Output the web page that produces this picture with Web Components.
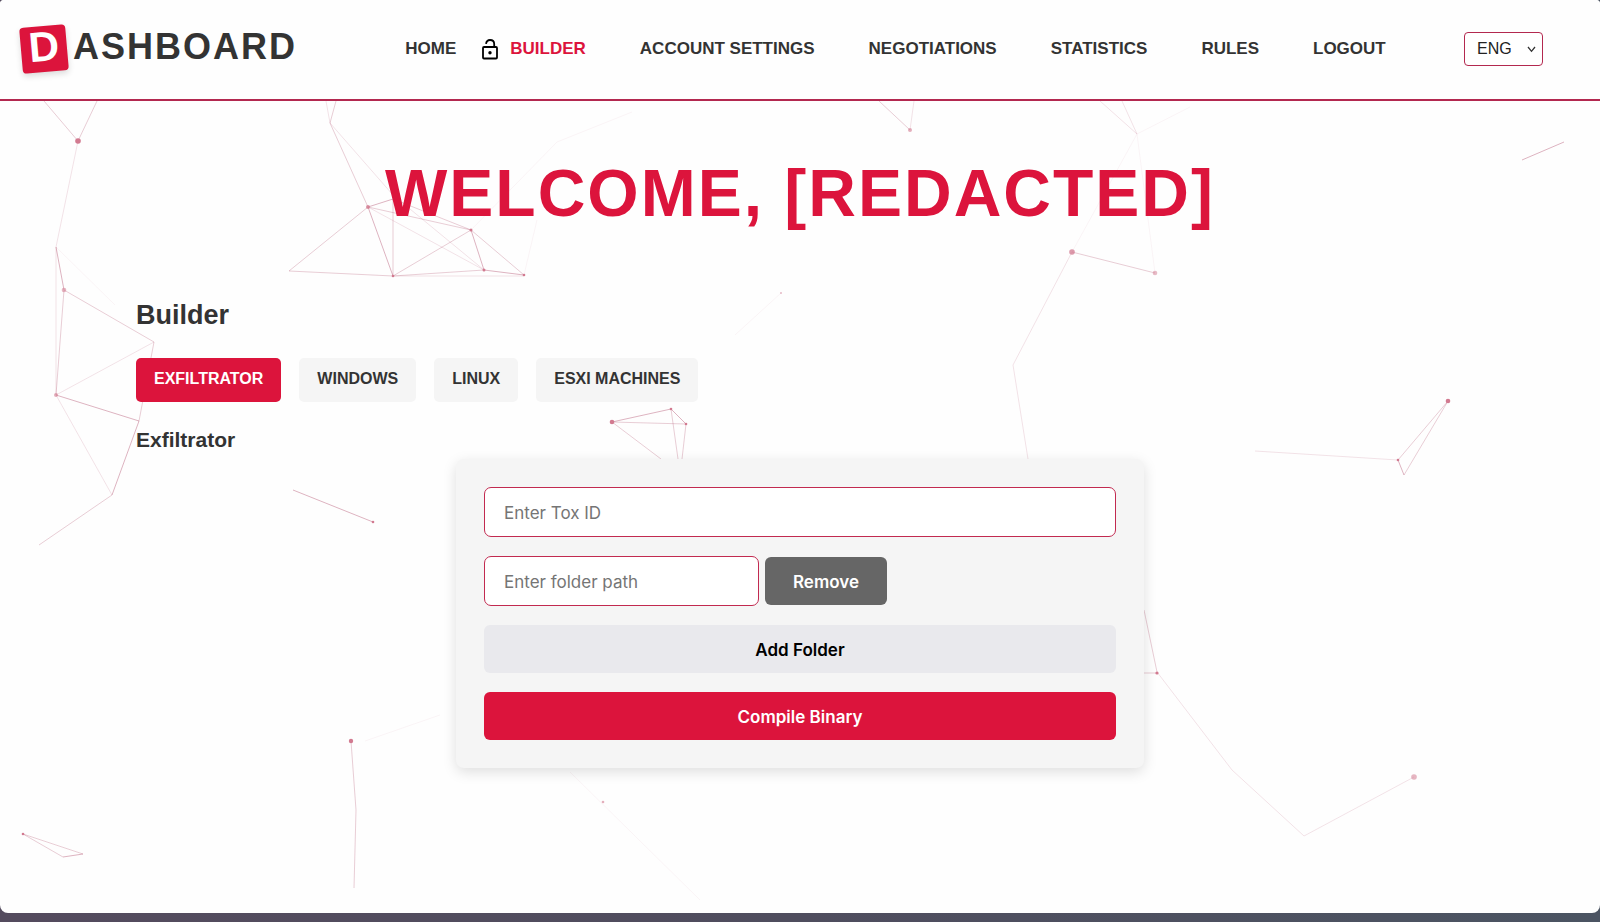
<!DOCTYPE html>
<html lang="en">
<head>
<meta charset="utf-8">
<meta name="viewport" content="width=device-width, initial-scale=1">
<title>Dashboard</title>
<style>
  html { background: linear-gradient(90deg, #544b5e, #4f4d5e 50%, #4b5462); }
  body {
    margin: 0;
    min-height: 100vh;
    display: flex;
    flex-direction: column;
    font-family: "Liberation Sans", Arial, sans-serif;
    color: #333;
    --accent: #dc143c;
    --line: #b3284f;
    --panel: #f5f5f5;
    --ui: Inter, "Liberation Sans", sans-serif;
  }
</style>
</head>
<body>
<app-window>
  <site-header slot="header">
    <brand-logo slot="brand" initial="D">ASHBOARD</brand-logo>
    <nav-link href="#home">HOME</nav-link>
    <nav-link href="#builder" active>BUILDER</nav-link>
    <nav-link href="#account">ACCOUNT SETTINGS</nav-link>
    <nav-link href="#negotiations">NEGOTIATIONS</nav-link>
    <nav-link href="#statistics">STATISTICS</nav-link>
    <nav-link href="#rules">RULES</nav-link>
    <nav-link href="#logout">LOGOUT</nav-link>
    <language-select slot="tools"></language-select>
  </site-header>
  <particle-field slot="backdrop"></particle-field>
  <builder-page>
    <span slot="title">WELCOME, [REDACTED]</span>
    <tab-button slot="tabs" active>EXFILTRATOR</tab-button>
    <tab-button slot="tabs">WINDOWS</tab-button>
    <tab-button slot="tabs">LINUX</tab-button>
    <tab-button slot="tabs">ESXI MACHINES</tab-button>
    <exfiltrator-form></exfiltrator-form>
  </builder-page>
</app-window>

<script>
const define = (name, html, setup) => {
  const template = document.createElement('template');
  template.innerHTML = html;
  customElements.define(name, class extends HTMLElement {
    constructor() {
      super();
      this.attachShadow({ mode: 'open' }).append(template.content.cloneNode(true));
    }
    connectedCallback() {
      if (setup) setup(this, this.shadowRoot);
    }
  });
};

define('app-window', `
  <style>
    :host { display: flex; flex-direction: column; flex: 1; margin-bottom: 9px;
      background: #fefefe; border-radius: 4px 4px 8px 8px; overflow: hidden; }
    .body { position: relative; flex: 1; }
    .content { position: relative; }
  </style>
  <slot name="header"></slot>
  <div class="body">
    <slot name="backdrop"></slot>
    <div class="content"><slot></slot></div>
  </div>`);

define('site-header', `
  <style>
    :host { display: block; }
    header { display: flex; align-items: center; box-sizing: border-box; min-height: 101px;
      padding: 0 57px 2px 21px; background: #fefefe; border-bottom: 2px solid var(--line); }
    nav { flex: 1; display: flex; justify-content: center; gap: 54px; padding-left: 30px; }
  </style>
  <header>
    <slot name="brand"></slot>
    <nav aria-label="Main"><slot></slot></nav>
    <slot name="tools"></slot>
  </header>`);

define('brand-logo', `
  <style>
    :host { display: flex; align-items: center; font-weight: 700; font-size: 36px;
      line-height: 40px; letter-spacing: 2px; }
    .tile { box-sizing: border-box; width: 46px; height: 46px; margin-right: 6px;
      display: flex; justify-content: center; font-size: 42px; line-height: 42px; letter-spacing: 0;
      color: #fff; background: var(--accent); border-radius: 4px; transform: rotate(-5deg);
      box-shadow: 0 3px 6px rgba(0, 0, 0, .14); }
    .word { padding-bottom: 4px; }
  </style>
  <span class="tile"></span><span class="word"><slot></slot></span>`,
  (host, root) => { root.querySelector('.tile').textContent = host.getAttribute('initial'); });

define('nav-link', `
  <style>
    :host { display: block; position: relative; font-size: 17px; line-height: 20px; font-weight: 700;
      white-space: nowrap; }
    a { color: inherit; text-decoration: none; }
    svg { display: none; position: absolute; right: 100%; top: 0; margin-right: 9px; }
    :host([active]) { color: var(--accent); }
    :host([active]) svg { display: block; }
  </style>
  <svg width="22" height="22" viewBox="0 0 22 22" fill="none" stroke="#000" stroke-width="1.800" aria-hidden="true">
    <rect x="4" y="8" width="14" height="11.500" rx="1"/>
    <path d="M7 4.800C7.400 2.500 9 1 11 1c2.500 0 4.200 1.700 4.200 4V8"/>
    <circle cx="11" cy="13.700" r="1.700" fill="#000" stroke="none"/>
  </svg>
  <a><slot></slot></a>`,
  (host, root) => { root.querySelector('a').href = host.getAttribute('href'); });

define('language-select', `
  <style>
    :host { display: block; position: relative; }
    select { appearance: none; display: block; box-sizing: border-box; width: 79px; height: 34px;
      padding: 0 24px 0 12px; font: 16px "Liberation Sans", Arial, sans-serif; color: #222;
      background: #fff; border: 1px solid var(--line); border-radius: 4px; }
    svg { position: absolute; right: 7px; top: 14px; pointer-events: none; }
  </style>
  <select aria-label="Language"><option>ENG</option></select>
  <svg width="9" height="7" viewBox="0 0 9 7" fill="none" stroke="#333" stroke-width="1.300" aria-hidden="true">
    <path d="M1 1l3.500 4.300L8 1"/>
  </svg>`);

define('builder-page', `
  <style>
    :host { display: block; }
    main { padding: 54px 136px 48px; }
    h1, h2, h3 { margin: 0; }
    h1 { text-align: center; font-size: 66px; line-height: 76px; letter-spacing: 2px; color: var(--accent); }
    h2 { margin-top: 68px; font-size: 27px; line-height: 32px; }
    .tabs { display: flex; flex-wrap: wrap; gap: 18px; margin-top: 27px; }
    h3 { margin-top: 25px; font-size: 21px; line-height: 26px; }
    .panel { margin-top: 6px; }
  </style>
  <main>
    <h1><slot name="title"></slot></h1>
    <h2>Builder</h2>
    <div class="tabs"><slot name="tabs"></slot></div>
    <h3>Exfiltrator</h3>
    <div class="panel"><slot></slot></div>
  </main>`);

define('tab-button', `
  <style>
    :host { display: block; }
    button { display: block; margin: 0; border: 0; border-radius: 5px; padding: 12px 18px 14px;
      font: 700 16px/18px "Liberation Sans", Arial, sans-serif; color: #333; background: var(--panel); }
    :host([active]) button { color: #fff; background: var(--accent); }
  </style>
  <button type="button"><slot></slot></button>`);

define('exfiltrator-form', `
  <style>
    :host { display: block; max-width: 688px; margin: 0 auto; }
    form { display: flex; flex-direction: column; gap: 19px; padding: 28px; background: var(--panel);
      border-radius: 8px; box-shadow: 0 4px 14px rgba(0, 0, 0, .13); }
    .row { display: flex; align-items: center; gap: 6px; }
    input { box-sizing: border-box; width: 100%; height: 50px; padding: 2px 19px 0;
      font: 17px var(--ui); color: #333; background: #fff; border: 1px solid #c22a50; border-radius: 7px; }
    input::placeholder { color: #757575; opacity: 1; }
    .row input { width: 275px; }
    button { height: 48px; border: 0; border-radius: 6px; padding: 2px 28px 0;
      font: 600 17px var(--ui); color: #fff; background: var(--accent); }
    .remove { background: #666; }
    .add { color: #000; background: #e9e9ed; }
  </style>
  <form>
    <input type="text" aria-label="Tox ID" placeholder="Enter Tox ID">
    <div class="row">
      <input type="text" aria-label="Folder path" placeholder="Enter folder path">
      <button type="button" class="remove">Remove</button>
    </div>
    <button type="button" class="add">Add Folder</button>
    <button type="button">Compile Binary</button>
  </form>`);

// Decorative particle network: line groups run from strong to faint.
define('particle-field', `
  <style>
    :host { display: block; position: absolute; inset: 0; overflow: hidden; }
    svg { display: block; width: 100%; height: 100%; }
    g { fill: none; stroke: #a83a5c; }
    .strong { stroke-opacity: .38; }
    .mid { stroke-opacity: .25; }
    .faint { stroke-opacity: .14; }
    .ghost { stroke-opacity: .05; }
    .dots { stroke: none; fill: #d27a90; }
  </style>
  <svg viewBox="0 101 1600 812" preserveAspectRatio="xMinYMin slice" aria-hidden="true">
    <g class="strong">
      <path d="M56 247L64 290M56 395L139 421M139 421L112 495M368 207L393 199M368 207L393 276M471 230L484 270L524 275M293 490L373 522"/>
      <path d="M612 422L671 409L686 424M1398 460L1404 475M1522 160L1564 142M63 857L83 854"/>
    </g>
    <g class="mid">
      <path d="M44 101L78 141L97 101M64 290L154 342L139 421M64 290L56 395M112 495L39 545"/>
      <path d="M336 101L330 123L368 207L289 271L393 276L484 270M393 199V276M393 276L471 230L524 275M368 207L471 230M393 199L471 230"/>
      <path d="M612 422L686 424L682 459M671 409L678 459M612 422L661 459"/>
      <path d="M1072 252L1155 273M1398 460L1448 401L1404 475M1144 610L1157 672M1144 673H1157"/>
      <path d="M351 741L356 810L354 888M63 857L23 834L83 854M879 101L910 130"/>
    </g>
    <g class="faint">
      <path d="M78 141L56 247M154 342L56 395L112 495M56 247V395M326 101L330 123L393 195L484 270M393 276H524M368 207L484 270"/>
      <path d="M914 101L910 130M1100 101L1137 134L1122 101M1072 252L1013 365L1028 459M1255 451L1398 460"/>
      <path d="M1157 672L1232 770L1304 836L1414 777"/>
    </g>
    <g class="ghost">
      <path d="M56 247L115 305M471 230L557 142L632 112M524 275L537 220M1137 134L1190 107M1137 134L1072 252M1137 134L1155 273"/>
      <path d="M570 772L700 900M365 741L440 715M735 335L781 293"/>
    </g>
    <g class="dots">
      <circle cx="78" cy="141" r="2.800"/><circle cx="612" cy="422" r="2.300"/><circle cx="1448" cy="401" r="2.300"/>
      <circle cx="351" cy="741" r="2.200"/><circle cx="1072" cy="252" r="2.800" opacity=".75"/>
      <circle cx="368" cy="207" r="2" opacity=".8"/><circle cx="1414" cy="777" r="2.800" opacity=".55"/>
      <circle cx="1155" cy="273" r="2.300" opacity=".5"/><circle cx="910" cy="130" r="2" opacity=".6"/>
      <circle cx="64" cy="290" r="2.300" opacity=".55"/><circle cx="56" cy="395" r="2" opacity=".6"/>
      <circle cx="1157" cy="673" r="1.600"/><circle cx="471" cy="230" r="1.500"/><circle cx="484" cy="270" r="1.500"/>
      <circle cx="373" cy="522" r="1.300"/><circle cx="524" cy="275" r="1.300"/><circle cx="393" cy="276" r="1.300"/>
      <circle cx="671" cy="409" r="1.300"/><circle cx="686" cy="424" r="1.300"/><circle cx="1398" cy="460" r="1.300"/>
      <circle cx="23" cy="834" r="1.300"/><circle cx="603" cy="802" r="1.300" opacity=".6"/><circle cx="781" cy="293" r="1" opacity=".5"/>
    </g>
  </svg>`);
</script>
</body>
</html>
